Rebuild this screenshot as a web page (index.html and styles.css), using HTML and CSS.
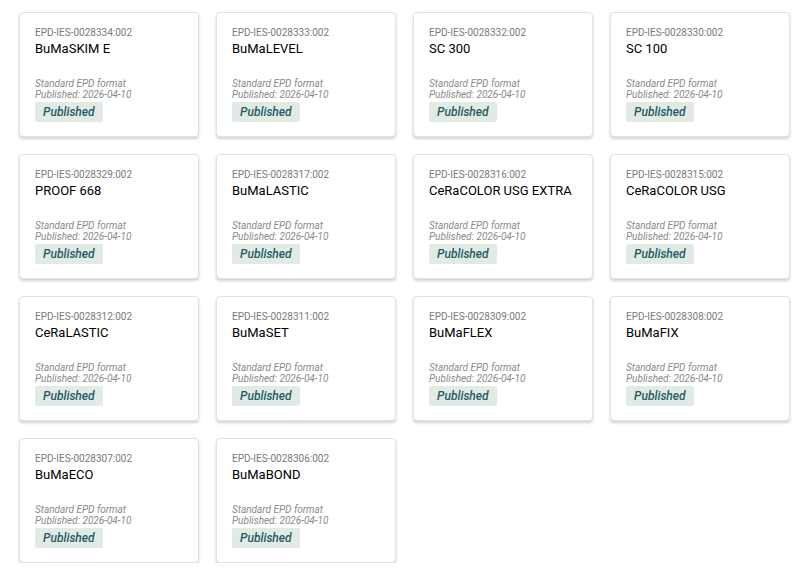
FILE: index.html
```html
<!DOCTYPE html>
<html lang="en">
<head>
    <meta charset="UTF-8">
    <meta name="viewport" content="width=device-width, initial-scale=1.0">
    <title>EPD list</title>
    <link rel="stylesheet" href="styles.css">
</head>
<body>
    <div class="epd-grid">
        <div class="epd-card">
            <div class="epd-code">EPD-IES-0028334:002</div>
            <div class="epd-name">BuMaSKIM E</div>
            <div class="epd-meta">Standard EPD format<br>Published: 2026-04-10</div>
            <span class="epd-status">Published</span>
        </div>
        <div class="epd-card">
            <div class="epd-code">EPD-IES-0028333:002</div>
            <div class="epd-name">BuMaLEVEL</div>
            <div class="epd-meta">Standard EPD format<br>Published: 2026-04-10</div>
            <span class="epd-status">Published</span>
        </div>
        <div class="epd-card">
            <div class="epd-code">EPD-IES-0028332:002</div>
            <div class="epd-name">SC 300</div>
            <div class="epd-meta">Standard EPD format<br>Published: 2026-04-10</div>
            <span class="epd-status">Published</span>
        </div>
        <div class="epd-card">
            <div class="epd-code">EPD-IES-0028330:002</div>
            <div class="epd-name">SC 100</div>
            <div class="epd-meta">Standard EPD format<br>Published: 2026-04-10</div>
            <span class="epd-status">Published</span>
        </div>

        <div class="epd-card">
            <div class="epd-code">EPD-IES-0028329:002</div>
            <div class="epd-name">PROOF 668</div>
            <div class="epd-meta">Standard EPD format<br>Published: 2026-04-10</div>
            <span class="epd-status">Published</span>
        </div>
        <div class="epd-card">
            <div class="epd-code">EPD-IES-0028317:002</div>
            <div class="epd-name">BuMaLASTIC</div>
            <div class="epd-meta">Standard EPD format<br>Published: 2026-04-10</div>
            <span class="epd-status">Published</span>
        </div>
        <div class="epd-card">
            <div class="epd-code">EPD-IES-0028316:002</div>
            <div class="epd-name">CeRaCOLOR USG EXTRA</div>
            <div class="epd-meta">Standard EPD format<br>Published: 2026-04-10</div>
            <span class="epd-status">Published</span>
        </div>
        <div class="epd-card">
            <div class="epd-code">EPD-IES-0028315:002</div>
            <div class="epd-name">CeRaCOLOR USG</div>
            <div class="epd-meta">Standard EPD format<br>Published: 2026-04-10</div>
            <span class="epd-status">Published</span>
        </div>

        <div class="epd-card">
            <div class="epd-code">EPD-IES-0028312:002</div>
            <div class="epd-name">CeRaLASTIC</div>
            <div class="epd-meta">Standard EPD format<br>Published: 2026-04-10</div>
            <span class="epd-status">Published</span>
        </div>
        <div class="epd-card">
            <div class="epd-code">EPD-IES-0028311:002</div>
            <div class="epd-name">BuMaSET</div>
            <div class="epd-meta">Standard EPD format<br>Published: 2026-04-10</div>
            <span class="epd-status">Published</span>
        </div>
        <div class="epd-card">
            <div class="epd-code">EPD-IES-0028309:002</div>
            <div class="epd-name">BuMaFLEX</div>
            <div class="epd-meta">Standard EPD format<br>Published: 2026-04-10</div>
            <span class="epd-status">Published</span>
        </div>
        <div class="epd-card">
            <div class="epd-code">EPD-IES-0028308:002</div>
            <div class="epd-name">BuMaFIX</div>
            <div class="epd-meta">Standard EPD format<br>Published: 2026-04-10</div>
            <span class="epd-status">Published</span>
        </div>

        <div class="epd-card">
            <div class="epd-code">EPD-IES-0028307:002</div>
            <div class="epd-name">BuMaECO</div>
            <div class="epd-meta">Standard EPD format<br>Published: 2026-04-10</div>
            <span class="epd-status">Published</span>
        </div>
        <div class="epd-card">
            <div class="epd-code">EPD-IES-0028306:002</div>
            <div class="epd-name">BuMaBOND</div>
            <div class="epd-meta">Standard EPD format<br>Published: 2026-04-10</div>
            <span class="epd-status">Published</span>
        </div>
    </div>
</body>
</html>
```

FILE: styles.css
```css
body {
    font-family: Roboto, 'Liberation Sans', Arial, sans-serif;
    background-color: #fff;
    margin: 0;
    padding: 12px 0 0 19px;
    color: #000;
}

.epd-grid {
    display: grid;
    grid-template-columns: repeat(4, 180px);
    grid-auto-rows: 125px;
    gap: 17px;
}

.epd-card {
    display: flex;
    flex-direction: column;
    align-items: flex-start;
    box-sizing: border-box;
    padding: 13px 15px 0;
    background-color: #fff;
    border: 1px solid #e2e2e2;
    border-radius: 4px;
    box-shadow: 0 2px 3px rgba(0, 0, 0, 0.18);
}

.epd-code {
    font-size: 10px;
    line-height: 14px;
    color: #7a7a7a;
}

.epd-name {
    font-size: 13px;
    line-height: 18px;
    color: #000;
}

.epd-meta {
    margin-top: 20px;
    font-size: 10px;
    line-height: 11px;
    font-style: italic;
    color: #8a8a8a;
}

.epd-status {
    margin-top: 2px;
    padding: 0 8px;
    height: 20px;
    line-height: 20px;
    font-size: 12px;
    font-style: italic;
    font-weight: 500;
    color: #1e5b66;
    background-color: #e2ebe3;
    border-radius: 2px;
}
```
